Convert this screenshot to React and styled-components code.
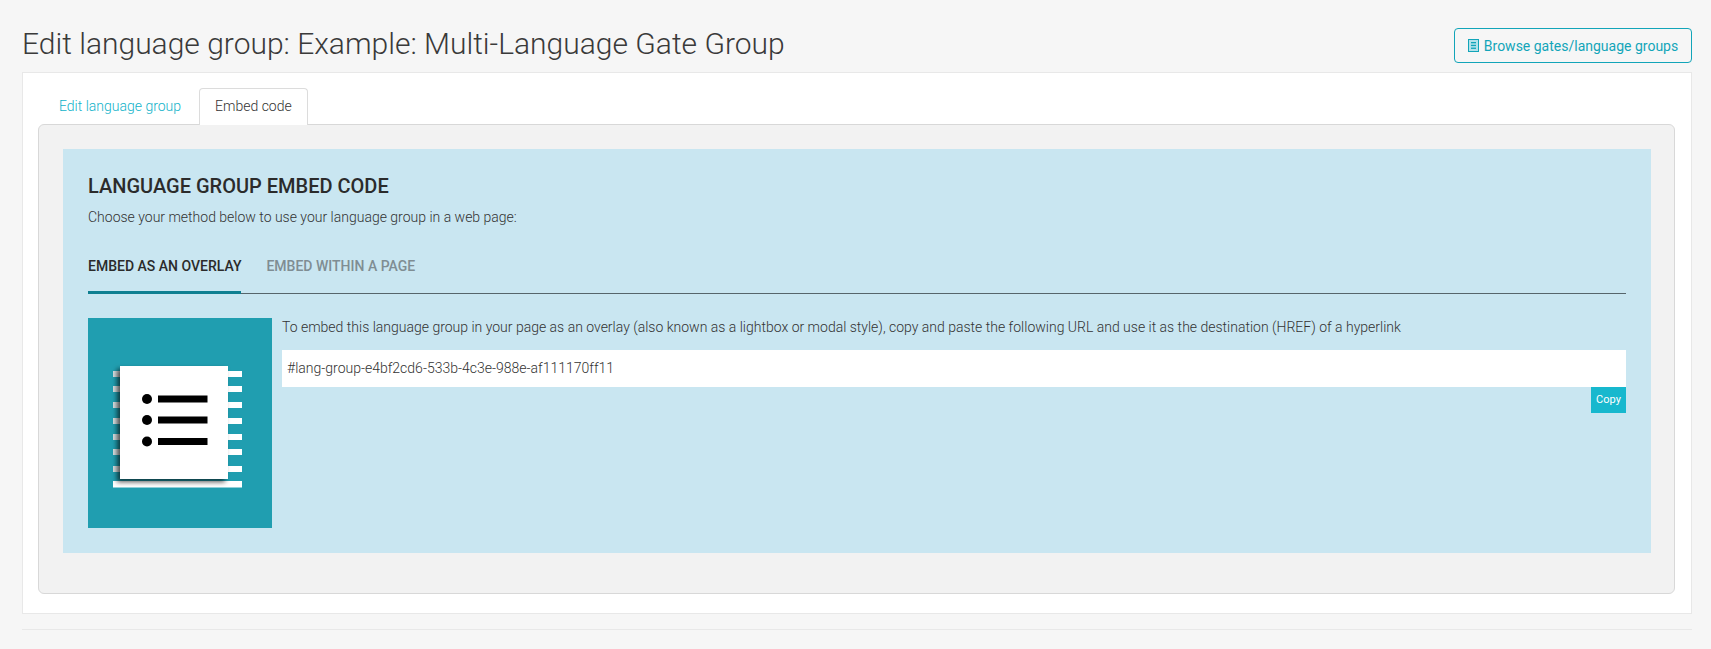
import React from 'react';
import styled, { createGlobalStyle } from 'styled-components';

const GlobalStyle = createGlobalStyle`
  html, body {
    margin: 0;
    padding: 0;
    background: #f6f6f6;
    font-family: Roboto, "Liberation Sans", sans-serif;
    color: #333;
  }
  * {
    box-sizing: border-box;
  }
`;

const Page = styled.div`
  width: 1711px;
  height: 649px;
  padding: 28px 19px 0 22px;
  overflow: hidden;
`;

const HeaderRow = styled.div`
  display: flex;
  justify-content: space-between;
  align-items: flex-start;
  height: 44px;
`;

const Title = styled.h1`
  margin: 0;
  font-size: 30px;
  line-height: 31px;
  font-weight: 300;
  color: #3a3a3a;
`;

const BrowseButton = styled.a`
  display: flex;
  align-items: center;
  justify-content: center;
  gap: 5px;
  width: 238px;
  height: 35px;
  border: 1px solid #12a5b9;
  border-radius: 4px;
  color: #12a5b9;
  font-size: 14px;
`;

const Card = styled.div`
  height: 542px;
  padding: 15px 16px 20px 15px;
  background: #fff;
  border: 1px solid #e8e8e8;
`;

const TabBar = styled.div`
  display: flex;
  gap: 2px;
  height: 36px;
  padding-left: 5px;
`;

const Tab = styled.div`
  height: 37px;
  padding: 0 15px;
  font-size: 14px;
  font-weight: 300;
  line-height: 35px;
  position: relative;
  z-index: 1;
  color: ${p => (p.$active ? '#333' : '#10b2c9')};
  background: ${p => (p.$active ? '#fff' : 'transparent')};
  border: 1px solid ${p => (p.$active ? '#dcdcdc' : 'transparent')};
  border-bottom: none;
  border-radius: 4px 4px 0 0;
`;

const Panel = styled.div`
  height: 470px;
  padding: 24px;
  background: #f2f2f2;
  border: 1px solid #d8d8d8;
  border-radius: 6px;
`;

const EmbedBox = styled.div`
  height: 404px;
  margin-right: -1px;
  padding: 25px 25px;
  background: #c9e6f1;
`;

const Heading = styled.h2`
  margin: 0;
  font-size: 20px;
  line-height: 24px;
  font-weight: 500;
  color: #2b2b2b;
`;

const Intro = styled.p`
  margin: 9px 0 0;
  font-size: 14px;
  line-height: 20px;
  font-weight: 300;
  color: #333;
`;

const MethodTabs = styled.div`
  display: flex;
  gap: 25px;
  height: 45px;
  margin-top: 22px;
  border-bottom: 1px solid #56656b;
`;

const MethodTab = styled.div`
  height: 45px;
  padding-top: 7px;
  font-size: 14px;
  line-height: 20px;
  font-weight: 500;
  color: ${p => (p.$active ? '#2b2b2b' : '#7f8d93')};
  border-bottom: 3px solid ${p => (p.$active ? '#0e7f91' : 'transparent')};
`;

const MethodBody = styled.div`
  display: flex;
  gap: 10px;
  margin-top: 24px;
`;

const Thumb = styled.svg`
  display: block;
  flex: none;
  width: 184px;
  height: 210px;
`;

const MethodText = styled.div`
  flex: 1;
  display: flex;
  flex-direction: column;
`;

const Hint = styled.p`
  margin: 0;
  font-size: 14px;
  line-height: 18px;
  font-weight: 300;
  color: #333;
`;

const CodeField = styled.div`
  height: 37px;
  margin-top: 14px;
  padding: 0 5px;
  background: #fff;
  font-size: 14px;
  line-height: 37px;
  font-weight: 300;
  color: #333;
`;

const CopyButton = styled.div`
  align-self: flex-end;
  width: 35px;
  height: 26px;
  background: #17b8ce;
  color: #fff;
  font-size: 11px;
  line-height: 25px;
  text-align: center;
`;

const FooterLine = styled.div`
  margin-top: 15px;
  border-top: 1px solid #e8e8e8;
`;

function BookIcon() {
  return (
    <svg width="11" height="13" viewBox="0 0 11 13" aria-hidden="true">
      <rect x="0.5" y="0.5" width="10" height="12" fill="#b5e2ea" stroke="#12a5b9" />
      <rect x="3" y="3" width="5" height="1.3" fill="#12a5b9" />
      <rect x="3" y="5.8" width="5" height="1.3" fill="#12a5b9" />
      <rect x="3" y="8.6" width="5" height="1.3" fill="#12a5b9" />
    </svg>
  );
}

const stripeRows = [53, 68, 84, 100, 116, 131, 148];

function ListThumb() {
  return (
    <Thumb viewBox="0 0 184 210" aria-hidden="true">
      <defs>
        <filter id="pageShadow" x="-20%" y="-20%" width="140%" height="140%">
          <feDropShadow dx="-3" dy="3" stdDeviation="2.5" floodColor="#000" floodOpacity="0.65" />
        </filter>
      </defs>
      <rect width="184" height="210" fill="#209eb0" />
      {stripeRows.map(y => (
        <React.Fragment key={y}>
          <rect x="25" y={y} width="8" height="6" fill="#d5dddf" />
          <rect x="139" y={y} width="15" height="6" fill="#fff" />
        </React.Fragment>
      ))}
      <rect x="25" y="163" width="129" height="6.5" fill="#fff" />
      <rect x="32" y="48" width="108" height="113" fill="#fff" filter="url(#pageShadow)" />
      <circle cx="59" cy="81" r="5" fill="#000" />
      <circle cx="59" cy="102" r="5" fill="#000" />
      <circle cx="59" cy="123.5" r="5" fill="#000" />
      <rect x="70" y="77.5" width="49.5" height="7" fill="#000" />
      <rect x="70" y="98.5" width="49.5" height="7" fill="#000" />
      <rect x="70" y="120" width="49.5" height="7" fill="#000" />
    </Thumb>
  );
}

export default function App() {
  return (
    <Page>
      <GlobalStyle />
      <HeaderRow>
        <Title>Edit language group: Example: Multi-Language Gate Group</Title>
        <BrowseButton>
          <BookIcon />
          Browse gates/language groups
        </BrowseButton>
      </HeaderRow>
      <Card>
        <TabBar>
          <Tab>Edit language group</Tab>
          <Tab $active>Embed code</Tab>
        </TabBar>
        <Panel>
          <EmbedBox>
            <Heading>LANGUAGE GROUP EMBED CODE</Heading>
            <Intro>Choose your method below to use your language group in a web page:</Intro>
            <MethodTabs>
              <MethodTab $active>EMBED AS AN OVERLAY</MethodTab>
              <MethodTab>EMBED WITHIN A PAGE</MethodTab>
            </MethodTabs>
            <MethodBody>
              <ListThumb />
              <MethodText>
                <Hint>
                  To embed this language group in your page as an overlay (also known as a lightbox or modal style), copy and paste the following URL and use it as the destination (HREF) of a hyperlink
                </Hint>
                <CodeField>#lang-group-e4bf2cd6-533b-4c3e-988e-af111170ff11</CodeField>
                <CopyButton>Copy</CopyButton>
              </MethodText>
            </MethodBody>
          </EmbedBox>
        </Panel>
      </Card>
      <FooterLine />
    </Page>
  );
}
